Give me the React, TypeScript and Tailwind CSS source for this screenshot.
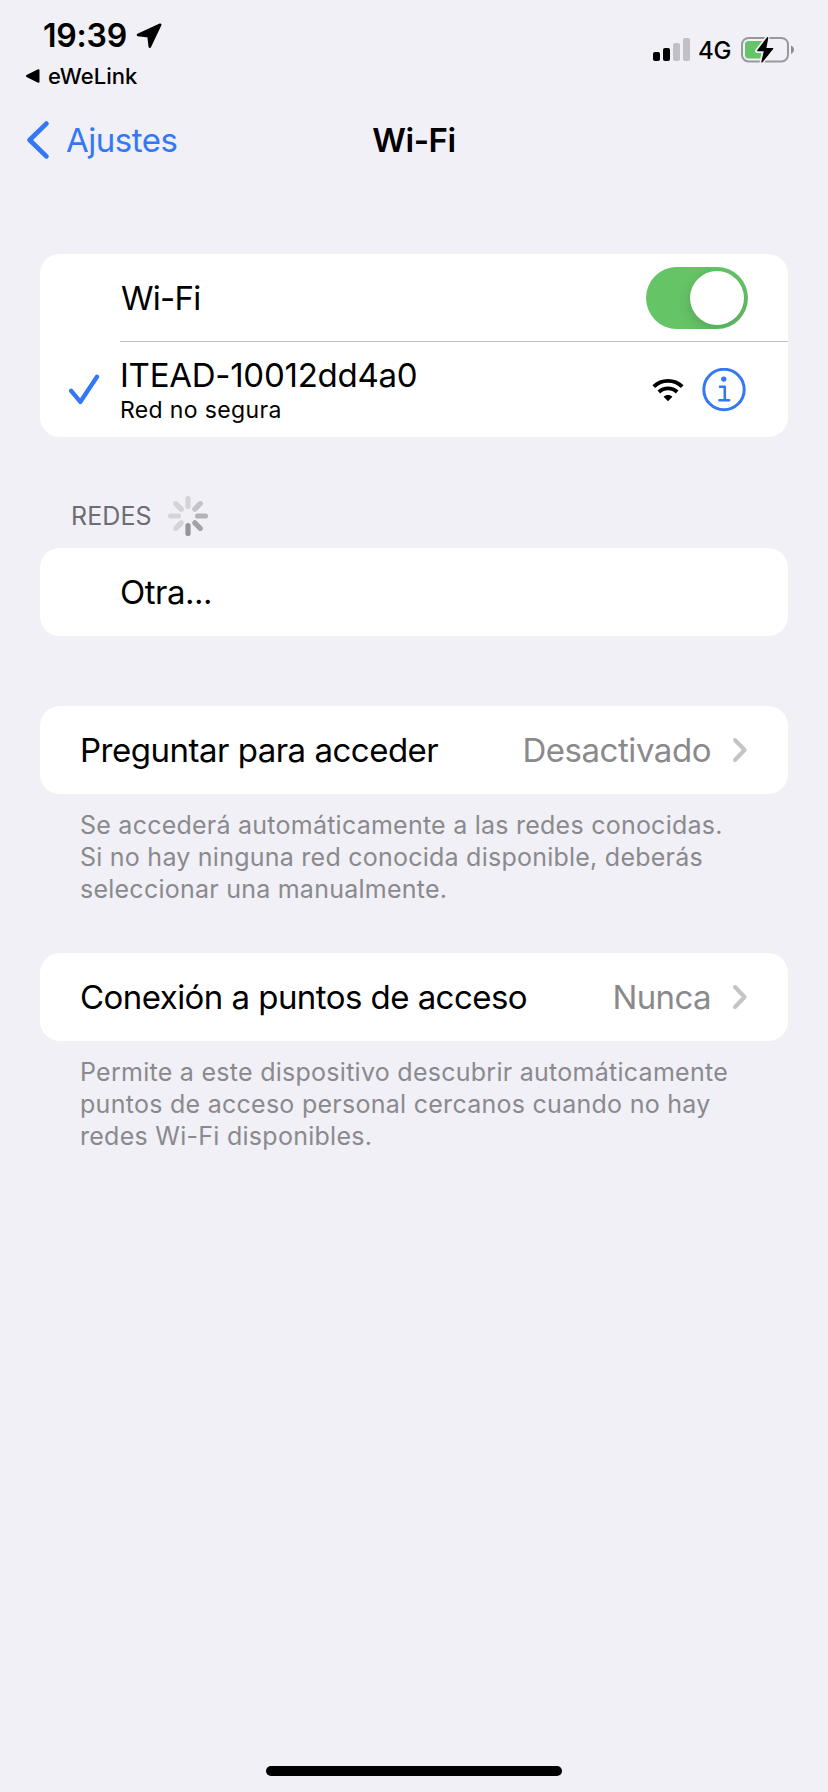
import type { ReactNode } from "react";

function Chevron() {
  return (
    <svg width="16" height="26" viewBox="0 0 16 26" fill="none" className="ml-[21px] shrink-0">
      <path d="M3 3L12.6 13L3 23" stroke="#c4c4c7" strokeWidth="4" strokeLinecap="round" strokeLinejoin="round" />
    </svg>
  );
}

function Card({ children, className = "" }: { children: ReactNode; className?: string }) {
  return <section className={`overflow-hidden rounded-[20px] bg-white ${className}`}>{children}</section>;
}

function StatusBar() {
  return (
    <header className="flex h-24 justify-between">
      <div className="flex flex-col pt-4">
        <div className="flex h-10 items-center pl-[43px]">
          <span className="text-[32px] leading-10 font-semibold tracking-[-0.2px]">19:39</span>
          <svg width="26" height="26" viewBox="0 0 26 26" className="ml-[9px]">
            <path d="M24.2 1.8L13.8 23.6L12.6 13.2L2 12Z" fill="#000" stroke="#000" strokeWidth="2.6" strokeLinejoin="round" />
          </svg>
        </div>
        <div className="mt-[6px] flex h-7 items-center pl-[25px]">
          <svg width="16" height="16" viewBox="0 0 16 16">
            <path d="M2 8L13.5 2.2V13.8Z" fill="#000" stroke="#000" strokeWidth="2" strokeLinejoin="round" />
          </svg>
          <span className="ml-[7px] text-[22px] leading-7 font-medium">eWeLink</span>
        </div>
      </div>
      <div className="flex h-[100px] items-center pr-8">
        <svg width="38" height="24" viewBox="0 0 38 24">
          <rect x="0" y="14" width="7" height="9" rx="2" fill="#000" />
          <rect x="10" y="10" width="7" height="13" rx="2" fill="#000" />
          <rect x="20" y="5" width="7" height="18" rx="2" fill="#c1c0c6" />
          <rect x="30" y="0" width="7" height="23" rx="2" fill="#c1c0c6" />
        </svg>
        <span className="mt-[2px] ml-[7px] text-[24px] leading-8 font-medium tracking-[-0.4px]">4G</span>
        <svg width="56" height="32" viewBox="0 0 56 32" className="ml-[9px]">
          <rect x="2" y="4" width="46" height="23.4" rx="6.5" fill="none" stroke="#99989c" strokeWidth="2" />
          <path d="M51 11.6C52.8 12.4 54 14 54 15.8C54 17.6 52.8 19.2 51 20Z" fill="#8e8d92" />
          <rect x="5" y="7" width="20" height="17.4" rx="3.6" fill="#65c466" />
          <path d="M27.6 3.2L17 17H23.8L21.6 28.6L33 14.2H25.8Z" fill="#000" stroke="#f1f0f6" strokeWidth="4" strokeLinejoin="round" />
          <path d="M27.6 3.8L17.8 16.6H24.6L22 27.8L32.6 14.6H25.6Z" fill="#000" stroke="#000" strokeWidth="1.4" strokeLinejoin="round" />
        </svg>
      </div>
    </header>
  );
}

function NavBar() {
  return (
    <nav className="grid h-[88px] grid-cols-3 items-center text-[33px] leading-10">
      <div className="flex items-center pl-[26px] text-[#3478f6]">
        <svg width="24" height="40" viewBox="0 0 24 40" fill="none">
          <path d="M20.4 3.6L3.6 20L20.4 36.4" stroke="#3478f6" strokeWidth="4.8" strokeLinecap="round" strokeLinejoin="round" />
        </svg>
        <span className="ml-4 tracking-[-0.5px]">Ajustes</span>
      </div>
      <h1 className="text-center font-semibold tracking-[-0.4px]">Wi-Fi</h1>
    </nav>
  );
}

function Toggle() {
  return (
    <div className="flex h-[62px] w-[102px] justify-end overflow-hidden rounded-full bg-[#65c466] p-1">
      <div className="h-[54px] w-[54px] rounded-full bg-white shadow-[0_4px_14px_rgba(0,0,0,0.16)]" />
    </div>
  );
}

function WifiIcon() {
  return (
    <svg width="32" height="24" viewBox="0 0 32 24" fill="none" stroke="#000" strokeWidth="3.9">
      <path d="M1.8 8.6C9.6 0.9 22.4 0.9 30.2 8.6" />
      <path d="M6.9 14C11.9 9.2 20.1 9.2 25.1 14" />
      <path d="M11.6 18.8C14 16.5 18 16.5 20.4 18.8L16 23.2Z" fill="#000" stroke="none" />
    </svg>
  );
}

function InfoIcon() {
  return (
    <svg width="44" height="44" viewBox="0 0 44 44" fill="none" stroke="#3478f6" className="ml-[18px]">
      <circle cx="22" cy="21.5" r="20.2" strokeWidth="3" />
      <circle cx="21.8" cy="11.1" r="2.7" fill="#3478f6" stroke="none" />
      <path d="M18 18.7H22.8V32.1M17.4 32.3H27.2" strokeWidth="2.6" strokeLinecap="round" strokeLinejoin="round" />
    </svg>
  );
}

const spokes = ["#d4d3d8", "#c4c3c8", "#b3b2b7", "#a3a2a7", "#959499", "#d4d3d8", "#d4d3d8", "#d4d3d8"];

function Spinner() {
  return (
    <svg width="40" height="40" viewBox="-20 -20 40 40" className="ml-4">
      {spokes.map((color, i) => (
        <rect key={i} x="-2.6" y="-20" width="5.2" height="13" rx="2.6" fill={color} transform={`rotate(${i * 45})`} />
      ))}
    </svg>
  );
}

export default function App() {
  return (
    <div className="flex h-[1792px] w-[828px] flex-col bg-[#f1f0f6] font-['Inter','Liberation_Sans',sans-serif] text-black">
      <StatusBar />
      <NavBar />
      <main className="flex flex-1 flex-col px-10 pt-[70px]">
        <Card className="h-[183px]">
          <div className="flex h-[87px] items-center justify-between pr-10 pl-[81px]">
            <span className="text-[33px] leading-10 tracking-[-0.7px]">Wi-Fi</span>
            <Toggle />
          </div>
          <div className="ml-20 h-px bg-[#bfbfc1]" />
          <div className="flex h-[95px] items-center pr-[42px]">
            <div className="w-20 pl-7">
              <svg width="32" height="32" viewBox="0 0 32 32" fill="none">
                <path d="M3.2 16.8L12.4 27.8L29 2.8" stroke="#3478f6" strokeWidth="4.4" strokeLinecap="round" strokeLinejoin="round" />
              </svg>
            </div>
            <div className="flex flex-1 flex-col">
              <span className="text-[33px] leading-10 tracking-[-0.26px]">ITEAD-10012dd4a0</span>
              <span className="text-[23px] leading-[30px] tracking-[0.35px]">Red no segura</span>
            </div>
            <WifiIcon />
            <InfoIcon />
          </div>
        </Card>

        <div className="mt-[63px] mb-4 flex h-8 items-center pl-[31px]">
          <h2 className="text-[25px] leading-8 tracking-[0.1px] text-[#6d6d72]">REDES</h2>
          <Spinner />
        </div>
        <Card className="flex h-[88px] items-center pl-20">
          <span className="text-[33px] leading-10 tracking-[-0.5px]">Otra...</span>
        </Card>

        <Card className="mt-[70px] flex h-[88px] items-center pr-10 pl-10">
          <span className="flex-1 text-[33px] leading-10 tracking-[-0.5px]">Preguntar para acceder</span>
          <span className="text-[33px] leading-10 tracking-[-0.45px] text-[#8a8a8d]">Desactivado</span>
          <Chevron />
        </Card>
        <p className="px-10 pt-[15px] text-[25px] leading-8 tracking-[0.24px] text-[#8a8a8e]">
          Se accederá automáticamente a las redes conocidas.
          <br />
          Si no hay ninguna red conocida disponible, deberás
          <br />
          seleccionar una manualmente.
        </p>

        <Card className="mt-12 flex h-[88px] items-center pr-10 pl-10">
          <span className="flex-1 text-[33px] leading-10 tracking-[-0.55px]">Conexión a puntos de acceso</span>
          <span className="text-[33px] leading-10 tracking-[-0.6px] text-[#8a8a8d]">Nunca</span>
          <Chevron />
        </Card>
        <p className="px-10 pt-[15px] text-[25px] leading-8 tracking-[0.27px] text-[#8a8a8e]">
          Permite a este dispositivo descubrir automáticamente
          <br />
          puntos de acceso personal cercanos cuando no hay
          <br />
          redes Wi-Fi disponibles.
        </p>
      </main>
      <footer className="flex justify-center pb-4">
        <div className="h-[10px] w-[296px] rounded-full bg-black" />
      </footer>
    </div>
  );
}
